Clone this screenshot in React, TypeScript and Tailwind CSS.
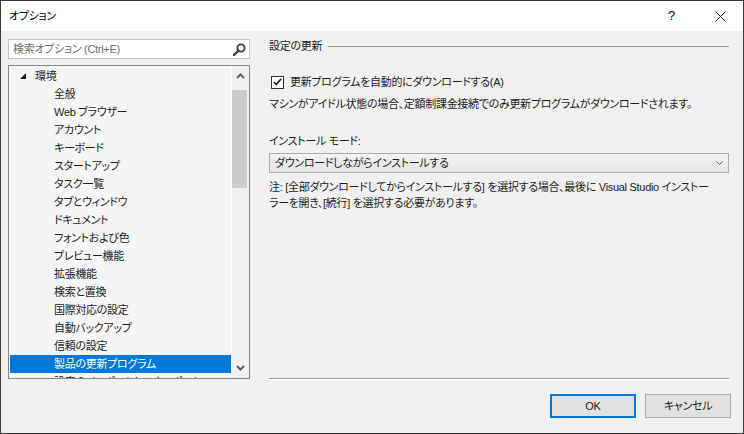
import type { ReactNode } from 'react';

const FONT = "[font-family:'Liberation_Sans','Noto_Sans_CJK_JP',sans-serif] [font-feature-settings:'palt']";

const CHILDREN = [
  '全般',
  'Web ブラウザー',
  'アカウント',
  'キーボード',
  'スタートアップ',
  'タスク一覧',
  'タブとウィンドウ',
  'ドキュメント',
  'フォントおよび色',
  'プレビュー機能',
  '拡張機能',
  '検索と置換',
  '国際対応の設定',
  '自動バックアップ',
  '信頼の設定',
  '製品の更新プログラム',
  '設定のインポートとエクスポート',
];

const SELECTED = '製品の更新プログラム';

function Row({ children, selected, indent }: { children: ReactNode; selected?: boolean; indent: string }) {
  return (
    <div
      className={`flex h-[18px] shrink-0 items-center whitespace-nowrap leading-[18px] ${indent} ${
        selected ? 'bg-[#0078d7] text-white' : 'text-[#1e1e1e]'
      }`}
    >
      {children}
    </div>
  );
}

function Chevron({ up }: { up?: boolean }) {
  return (
    <svg width="9" height="6" viewBox="0 0 9 6" className="block">
      <path
        d={up ? 'M1 5 L4.5 1.5 L8 5' : 'M1 1 L4.5 4.5 L8 1'}
        fill="none"
        stroke="#606060"
        strokeWidth="2"
      />
    </svg>
  );
}

function Tree() {
  return (
    <div className="flex h-[314px] border border-[#828790] bg-[#f5f5f5]">
      <div className="flex flex-1 flex-col overflow-hidden py-px pl-px">
        <Row indent="pl-[10px]">
          <svg width="6" height="6" viewBox="0 0 6 6" className="mr-[9px]">
            <polygon points="6,0 6,6 0,6" fill="#1e1e1e" />
          </svg>
          環境
        </Row>
        {CHILDREN.map((item) => (
          <Row key={item} indent="pl-[44px]" selected={item === SELECTED}>
            {item}
          </Row>
        ))}
      </div>
      <div className="flex w-[18px] flex-col border-l border-white bg-[#f0f0f0]">
        <div className="flex h-[18px] items-center justify-center pt-[2px]">
          <Chevron up />
        </div>
        <div className="mt-[6px] h-[98px] w-[15px] bg-[#cdcdcd]" />
        <div className="flex-1" />
        <div className="flex h-[18px] items-center justify-center pb-[2px]">
          <Chevron />
        </div>
      </div>
    </div>
  );
}

export default function App() {
  return (
    <div
      className={`flex h-[434px] w-[744px] flex-col border border-[#3a3a3a] bg-[#f0f0f0] text-[11px] tracking-[-0.3px] ${FONT}`}
    >
      {/* title bar */}
      <div className="flex h-[30px] shrink-0 items-center bg-white pl-[8px] text-black">
        <span className="flex-1">オプション</span>
        <span className="mr-[40px] text-[13px]">?</span>
        <svg width="11" height="11" viewBox="0 0 11 11" className="mr-[17px]">
          <path d="M0.5 0.5 L10.5 10.5 M10.5 0.5 L0.5 10.5" stroke="#1e1e1e" strokeWidth="1" />
        </svg>
      </div>

      <div className="flex flex-1">
        {/* left */}
        <div className="ml-[7px] flex w-[242px] flex-col gap-[6px] pt-[8px]">
          <div className="flex h-[20px] items-center border border-[#c5c5c5] bg-white pl-[4px] pr-[3px]">
            <span className="flex-1 text-[#6d6d6d]">検索オプション (Ctrl+E)</span>
            <svg width="13" height="13" viewBox="0 0 13 13">
              <circle cx="8" cy="5" r="3.6" fill="none" stroke="#3c3c3c" strokeWidth="1.8" />
              <path d="M5.4 7.6 L1 12" stroke="#3c3c3c" strokeWidth="2.4" strokeLinecap="round" />
            </svg>
          </div>
          <Tree />
        </div>

        {/* right */}
        <div className="ml-[19px] mr-[14px] flex flex-1 flex-col pb-[15px] pt-[7px] text-[#1e1e1e]">
          <div className="flex h-[16px] items-center">
            <span>設定の更新</span>
            <div className="ml-[6px] h-px flex-1 bg-[#a0a0a0]" />
          </div>

          <label className="ml-[2px] mt-[20px] flex h-[16px] items-center gap-[6px]">
            <span className="flex h-[13px] w-[13px] items-center justify-center border border-[#333333] bg-white">
              <svg width="9" height="8" viewBox="0 0 9 8">
                <path d="M0.8 4 L3.3 6.5 L8.2 0.8" fill="none" stroke="#1e1e1e" strokeWidth="1.6" />
              </svg>
            </span>
            <span>更新プログラムを自動的にダウンロードする(A)</span>
          </label>

          <p className="mt-[6px] whitespace-nowrap leading-[16px]">
            マシンがアイドル状態の場合、定額制課金接続でのみ更新プログラムがダウンロードされます。
          </p>

          <p className="mt-[21px] leading-[16px]">インストール モード:</p>

          <div className="mt-[4px] flex h-[20px] items-center border border-[#adadad] bg-linear-to-b from-[#f2f2f2] to-[#e5e5e5] pl-[5px] pr-[5px]">
            <span className="flex-1">ダウンロードしながらインストールする</span>
            <svg width="7" height="4" viewBox="0 0 7 4">
              <path d="M0.5 0.5 L3.5 3.5 L6.5 0.5" fill="none" stroke="#606060" strokeWidth="1" />
            </svg>
          </div>

          <p className="mt-[6px] whitespace-nowrap leading-[16px]">
            注: [全部ダウンロードしてからインストールする] を選択する場合、最後に Visual Studio インストー
            <br />
            ラーを開き、[続行] を選択する必要があります。
          </p>

          <div className="flex-1" />

          <div className="h-px bg-[#a0a0a0]" />
          <div className="h-px bg-white" />

          <div className="-mr-[2px] mt-[14px] flex justify-end gap-[9px]">
            <button className="h-[24px] w-[86px] border-2 border-[#0078d7] bg-[#e1e1e1] text-[#1e1e1e]">OK</button>
            <button className="h-[24px] w-[86px] border border-[#adadad] bg-[#e1e1e1] text-[#1e1e1e]">キャンセル</button>
          </div>
        </div>
      </div>
    </div>
  );
}
